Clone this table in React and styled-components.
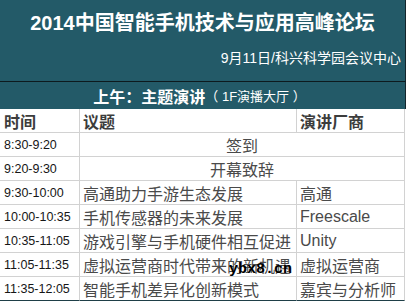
import React from "react";
import styled, { createGlobalStyle } from "styled-components";

const Global = createGlobalStyle`
  html, body { margin: 0; padding: 0; background: #ffffff; }
  body { font-family: "Liberation Sans", "Noto Sans CJK SC", sans-serif; }
`;

const Page = styled.div`
  position: relative;
  width: 406px;
  height: 301px;
  overflow: hidden;
`;

const TitleBar = styled.header`
  height: 81px;
  background: #235a68;
  border-bottom: 1px solid #0d1a1e;
  border-right: 1px solid #13262c;
  display: flex;
  flex-direction: column;
  color: #ffffff;
`;

const Title = styled.h1`
  margin: 0;
  padding-top: 10px;
  height: 27px;
  text-align: center;
  font-size: 20px;
  line-height: 27px;
  font-weight: bold;
`;

const Subtitle = styled.div`
  margin-top: 10px;
  padding-right: 4px;
  text-align: right;
  font-size: 14px;
  line-height: 22px;
`;

const SessionBar = styled.div`
  height: 27px;
  background: #235a68;
  border-right: 1px solid #13262c;
  color: #ffffff;
  display: flex;
  align-items: center;
  justify-content: center;
  padding-right: 6px;
  box-sizing: border-box;
`;

const SessionMain = styled.span`
  font-size: 16px;
  font-weight: bold;
`;

const SessionNote = styled.span`
  font-size: 13px;
`;

const Table = styled.div`
  display: grid;
  grid-template-columns: 80px 217px 108px;
  width: 405px;
`;

const Cell = styled.div`
  box-sizing: border-box;
  height: 24px;
  display: flex;
  align-items: center;
  justify-content: ${(p) => (p.$center ? "center" : "flex-start")};
  padding-left: ${(p) => (p.$center ? "0" : p.$first ? "4px" : "3px")};
  grid-column: ${(p) => (p.$span ? `span ${p.$span}` : "auto")};
  border-bottom: 1px solid ${(p) => (p.$last ? "#1f3f48" : "#d2d2d2")};
  border-right: 1px solid #d2d2d2;
  white-space: nowrap;
  overflow: hidden;
  color: ${(p) => (p.$head ? "#3c3c3c" : p.$time ? "#161616" : "#4a4a4a")};
  font-size: ${(p) => (p.$time ? "12.5px" : "16px")};
  font-weight: ${(p) => (p.$head ? "bold" : "normal")};
`;

const Watermark = styled.div`
  position: absolute;
  left: 229px;
  top: 261px;
  font-family: "Liberation Mono", monospace;
  font-weight: bold;
  font-size: 15px;
  color: #000000;
`;

const rows = [
  { time: "8:30-9:20", topic: "签到", merged: true },
  { time: "9:20-9:30", topic: "开幕致辞", merged: true },
  { time: "9:30-10:00", topic: "高通助力手游生态发展", vendor: "高通" },
  { time: "10:00-10:35", topic: "手机传感器的未来发展", vendor: "Freescale" },
  { time: "10:35-11:05", topic: "游戏引擎与手机硬件相互促进", vendor: "Unity" },
  { time: "11:05-11:35", topic: "虚拟运营商时代带来的新机遇", vendor: "虚拟运营商" },
  { time: "11:35-12:05", topic: "智能手机差异化创新模式", vendor: "嘉宾与分析师" },
];

export default function App() {
  return (
    <Page>
      <Global />
      <TitleBar>
        <Title>2014中国智能手机技术与应用高峰论坛</Title>
        <Subtitle>9月11日/科兴科学园会议中心</Subtitle>
      </TitleBar>
      <SessionBar>
        <SessionMain>上午：主题演讲</SessionMain>
        <SessionNote>（ 1F演播大厅 ）</SessionNote>
      </SessionBar>
      <Table>
        <Cell $head $first>时间</Cell>
        <Cell $head>议题</Cell>
        <Cell $head>演讲厂商</Cell>
        {rows.map((r, i) => {
          const last = i === rows.length - 1;
          return (
            <React.Fragment key={r.time}>
              <Cell $time $first $last={last}>{r.time}</Cell>
              {r.merged ? (
                <Cell $span={2} $center $last={last}>{r.topic}</Cell>
              ) : (
                <>
                  <Cell $last={last}>{r.topic}</Cell>
                  <Cell $last={last}>{r.vendor}</Cell>
                </>
              )}
            </React.Fragment>
          );
        })}
      </Table>
      <Watermark>ybx8.cn</Watermark>
    </Page>
  );
}
